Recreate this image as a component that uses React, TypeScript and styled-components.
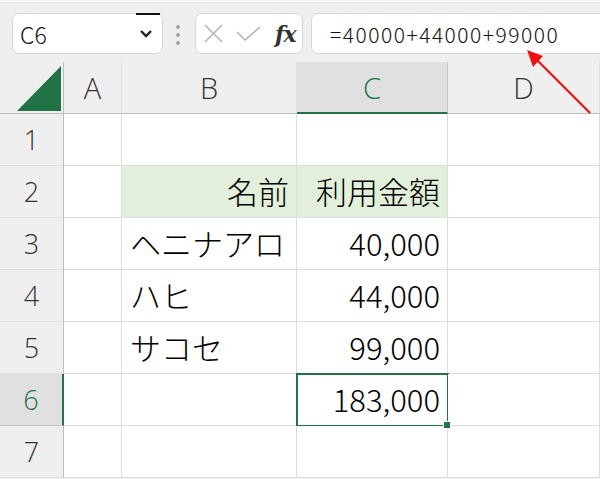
import React from 'react';
import styled, { createGlobalStyle, css } from 'styled-components';

const GREEN = '#217346';
const GRID = '#dedede';
const HEAD_BG = '#efefef';
const HEAD_ACTIVE = '#e0e0e0';

const GlobalStyle = createGlobalStyle`
  html, body {
    margin: 0;
    padding: 0;
  }
  body {
    background: ${HEAD_BG};
    font-family: "Noto Sans CJK JP", "Noto Sans", sans-serif;
    overflow: hidden;
  }
`;

const Frame = styled.div`
  position: relative;
  width: 600px;
  height: 479px;
  overflow: hidden;
  background: ${HEAD_BG};
  display: flex;
  flex-direction: column;
`;

const FormulaBar = styled.div`
  height: 62px;
  box-sizing: border-box;
  display: flex;
  align-items: flex-start;
  padding: 11px 0 0 12px;
  border-top: 2px solid #f7f7f7;
  box-shadow: inset 0 1px 0 #e6e6e6;
`;

const Box = styled.div`
  height: 41px;
  box-sizing: border-box;
  background: #fff;
  border: 1px solid #d6d6d6;
  border-radius: 7px;
  display: flex;
  align-items: center;
`;

const NameBox = styled(Box)`
  position: relative;
  width: 151px;
  justify-content: space-between;
  padding: 0 9px 0 7px;
  font-size: 23px;
  font-weight: 300;
  color: #111;

  &::before {
    content: '';
    position: absolute;
    top: -1px;
    right: 2px;
    width: 24px;
    height: 2px;
    background: #111;
  }
`;

const Dots = styled.div`
  display: flex;
  flex-direction: column;
  gap: 4px;
  margin: 12px 15px 0 13px;
`;

const Dot = styled.span`
  width: 4px;
  height: 4px;
  border-radius: 50%;
  background: #a0a0a0;
`;

const FxBox = styled(Box)`
  width: 108px;
  gap: 13px;
  padding-left: 8px;
`;

const FxLabel = styled.span`
  font-family: "DejaVu Serif", "Liberation Serif", serif;
  font-style: italic;
  font-weight: 700;
  font-size: 22px;
  color: #333;
  margin-left: 1px;
  letter-spacing: -1px;
`;

const FormulaInput = styled(Box)`
  flex: 1;
  margin: 0 -20px 0 8px;
  padding-left: 18px;
  font-size: 21px;
  font-weight: 300;
  letter-spacing: 1.5px;
  color: #111;
`;

const Sheet = styled.div`
  flex: 1;
  display: grid;
  grid-template-columns: 64px 58px 175px 151px 1fr;
  grid-template-rows: 52px;
  grid-auto-rows: 52px;
`;

const Corner = styled.div`
  background: ${HEAD_BG};
  border-right: 1px solid #bdbdbd;
  border-bottom: 1px solid #bdbdbd;
  box-sizing: border-box;
`;

const ColHeader = styled.div<{ $active?: boolean }>`
  box-sizing: border-box;
  display: flex;
  align-items: center;
  justify-content: center;
  font-family: "Open Sans", sans-serif;
  font-size: 29px;
  font-weight: 300;
  color: #333;
  background: ${HEAD_BG};
  border-right: 1px solid ${GRID};
  border-bottom: 1px solid #bdbdbd;
  ${p =>
    p.$active &&
    css`
      background: ${HEAD_ACTIVE};
      color: ${GREEN};
      border-right-color: #c8c8c8;
      border-bottom: 2px solid ${GREEN};
    `}
`;

const RowHeader = styled.div<{ $active?: boolean }>`
  box-sizing: border-box;
  display: flex;
  align-items: center;
  justify-content: center;
  font-family: "Open Sans", sans-serif;
  font-size: 27px;
  font-weight: 300;
  color: #333;
  background: ${HEAD_BG};
  border-right: 1px solid #bdbdbd;
  border-bottom: 1px solid ${GRID};
  ${p =>
    p.$active &&
    css`
      background: ${HEAD_ACTIVE};
      color: ${GREEN};
      border-right: 2px solid ${GREEN};
      border-bottom-color: #c8c8c8;
    `}
`;

const Cell = styled.div<{ $align?: 'left' | 'right'; $fill?: boolean; $selected?: boolean }>`
  position: relative;
  box-sizing: border-box;
  display: flex;
  align-items: center;
  justify-content: ${p => (p.$align === 'right' ? 'flex-end' : 'flex-start')};
  padding: 0 7px 2px 8px;
  font-size: 31px;
  font-weight: 300;
  color: #000;
  white-space: nowrap;
  background: ${p => (p.$fill ? '#e2efda' : '#fff')};
  border-right: 1px solid ${GRID};
  border-bottom: 1px solid ${GRID};

  ${p =>
    p.$selected &&
    css`
      &::after {
        content: '';
        position: absolute;
        top: -1px;
        left: -1px;
        right: -2px;
        bottom: -2px;
        border: 2px solid ${GREEN};
      }
    `}
`;

const FillHandle = styled.span`
  position: absolute;
  right: -4px;
  bottom: -4px;
  width: 6px;
  height: 6px;
  background: ${GREEN};
  border: 1px solid #fff;
  z-index: 1;
`;

const Overlay = styled.svg`
  position: absolute;
  inset: 0;
  pointer-events: none;
`;

type Row = { b?: string; c?: string; fill?: boolean };

const ROWS: Row[] = [
  {},
  { b: '名前', c: '利用金額', fill: true },
  { b: 'ヘニナアロ', c: '40,000' },
  { b: 'ハヒ', c: '44,000' },
  { b: 'サコセ', c: '99,000' },
  { c: '183,000' },
  {},
];

const ACTIVE_ROW = 6;

export default function App() {
  return (
    <Frame>
      <GlobalStyle />
      <FormulaBar>
        <NameBox>
          C6
          <svg width="14" height="9" viewBox="0 0 14 9">
            <path d="M2 2l5 5 5-5" fill="none" stroke="#222" strokeWidth="2.4" />
          </svg>
        </NameBox>
        <Dots>
          <Dot />
          <Dot />
          <Dot />
        </Dots>
        <FxBox>
          <svg width="19" height="19" viewBox="0 0 19 19">
            <path d="M1 1l17 17M18 1L1 18" stroke="#b4b4b4" strokeWidth="1.6" />
          </svg>
          <svg width="25" height="15" viewBox="0 0 25 15">
            <path d="M1 6l8 8L24 1" fill="none" stroke="#b4b4b4" strokeWidth="1.6" />
          </svg>
          <FxLabel>fx</FxLabel>
        </FxBox>
        <FormulaInput>=40000+44000+99000</FormulaInput>
      </FormulaBar>

      <Sheet>
        <Corner>
          <svg width="63" height="51" viewBox="0 0 63 51">
            <path d="M17 49H61V4Z" fill={GREEN} />
          </svg>
        </Corner>
        <ColHeader>A</ColHeader>
        <ColHeader>B</ColHeader>
        <ColHeader $active>C</ColHeader>
        <ColHeader>D</ColHeader>

        {ROWS.map((r, i) => {
          const n = i + 1;
          const sel = n === ACTIVE_ROW;
          return (
            <React.Fragment key={n}>
              <RowHeader $active={sel}>{n}</RowHeader>
              <Cell />
              <Cell $fill={r.fill} $align={r.fill ? 'right' : 'left'}>
                {r.b}
              </Cell>
              <Cell $fill={r.fill} $align="right" $selected={sel}>
                {r.c}
                {sel && <FillHandle />}
              </Cell>
              <Cell />
            </React.Fragment>
          );
        })}
      </Sheet>

      <Overlay width="600" height="479" viewBox="0 0 600 479">
        <line x1="590" y1="113" x2="536" y2="59" stroke="#ee1111" strokeWidth="2.2" />
        <path d="M527 50L533 67L543 56Z" fill="#ee1111" />
      </Overlay>
    </Frame>
  );
}
